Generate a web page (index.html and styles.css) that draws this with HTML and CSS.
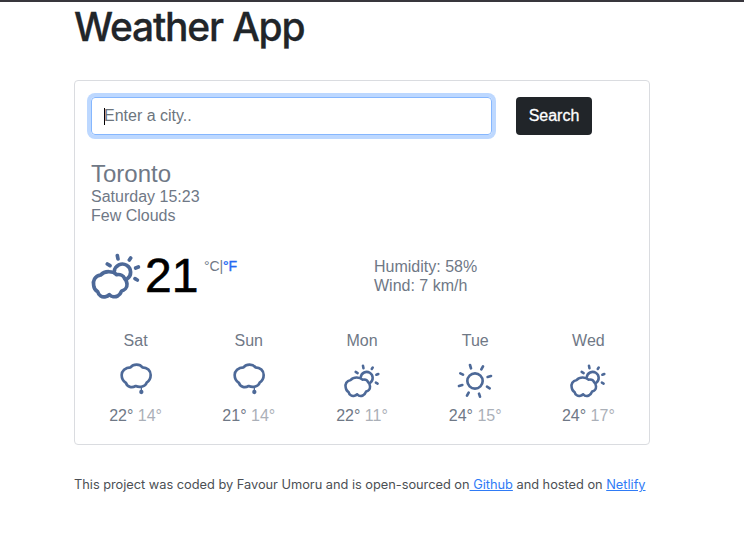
FILE: index.html
```
<!DOCTYPE html>
<html lang="en">
<head>
<meta charset="utf-8">
<title>Weather App</title>
<link rel="stylesheet" href="styles.css">
</head>
<body>
<svg class="defs" width="0" height="0">
  <symbol id="partly" viewBox="30 35 156 147">
    <path d="M62 104C44 107 38 122 41 135C42 145 47 151 53 154C56 166 66 172 77 169Q83 168 88 163C94 170 105 171 113 167C120 163 123 157 125 152C133 150 142 142 141 131C140 122 138 118 134 115C131 106 121 101 110 103C100 92 74 90 62 104Z"/>
    <path d="M103 93A24.500 24.500 0 1 1 141 116"/>
    <path class="ray" d="M112 46L114 56M152 53L148 59M82 71L90 76M167 83L175 80M165 115L172 119"/>
  </symbol>
  <symbol id="rain" viewBox="78 114 120 108" overflow="visible">
    <path d="M122 127C130 116 150 116 157 127C172 127 182 137 182 150C182 162 176 169 170 173C166 185 150 189 137 183C126 189 112 187 108 174C98 168 95 160 95 150C95 138 105 127 122 127Z"/>
    <path class="stem" d="M154 187V200"/>
    <circle class="drop" cx="154" cy="201" r="6.5"/>
  </symbol>
  <symbol id="sun" viewBox="405 114 120 108" overflow="visible">
    <circle cx="465" cy="168" r="23"/>
    <path d="M450 120L453 130M489 124L484 133M513 153L503 156M509 190L501 185M480 215L477 206M441 212L446 203M417 183L427 180M421 145L429 149"/>
  </symbol>
</svg>
<main class="container">
  <h1>Weather App</h1>
  <section class="card">
    <form class="search">
      <div class="field"><span class="caret"></span>Enter a city..</div>
      <button type="button">Search</button>
    </form>
    <div class="place">
      <h2>Toronto</h2>
      <div>Saturday 15:23</div>
      <div>Few Clouds</div>
    </div>
    <div class="now">
      <div class="reading">
        <svg class="icon big"><use href="#partly"/></svg>
        <strong>21</strong>
        <span class="units">°C|<a>°F</a></span>
      </div>
      <div class="details">
        <div>Humidity: 58%</div>
        <div>Wind: 7 km/h</div>
      </div>
    </div>
    <div class="forecast">
      <div class="day"><span>Sat</span><svg class="icon"><use href="#rain"/></svg><span>22° <i>14°</i></span></div>
      <div class="day"><span>Sun</span><svg class="icon"><use href="#rain"/></svg><span>21° <i>14°</i></span></div>
      <div class="day"><span>Mon</span><svg class="icon small"><use href="#partly"/></svg><span>22° <i>11°</i></span></div>
      <div class="day"><span>Tue</span><svg class="icon"><use href="#sun"/></svg><span>24° <i>15°</i></span></div>
      <div class="day"><span>Wed</span><svg class="icon small"><use href="#partly"/></svg><span>24° <i>17°</i></span></div>
    </div>
  </section>
  <footer>This project was coded by Favour Umoru and is open-sourced on<a> Github</a> and hosted on <a>Netlify</a></footer>
</main>
</body>
</html>
```
FILE: styles.css
```
* { box-sizing: border-box; }
body {
  margin: 0;
  border-top: 2px solid #38363c;
  background: #fff;
  color: #6f7886;
  font: 16px/19px "Liberation Sans", Arial, sans-serif;
}
.defs { position: absolute; }
.container { width: 576px; margin-left: 74px; }
h1 {
  margin: 0 0 28px;
  height: 50px;
  color: #212529;
  font: 500 39px/50px Inter, sans-serif;
  letter-spacing: -1.2px;
  -webkit-text-stroke: 0.3px #212529;
}
.card {
  height: 365px;
  padding: 16px;
  border: 1px solid #dadce0;
  border-radius: 4px;
}
.search { display: flex; gap: 24px; }
.field {
  display: flex;
  align-items: center;
  width: 401px;
  height: 38px;
  padding: 0 12px 2px;
  border: 1px solid #86b7fe;
  border-radius: 4px;
  box-shadow: 0 0 0 4px #bdd8ff;
  color: #6c757d;
}
.caret { width: 1px; height: 17px; margin: 2px -1px 0 0; background: #000; }
button {
  width: 76px;
  height: 38px;
  padding: 0 0 2px;
  border: 0;
  border-radius: 4px;
  background: #212529;
  color: #fff;
  font: inherit;
  -webkit-text-stroke: 0.3px #fff;
}
.place { margin-top: 25px; }
h2 { margin: 0; font-size: 24px; line-height: 27px; font-weight: 400; }
.now { display: flex; height: 54px; margin-top: 25px; }
.reading { display: flex; width: 283px; }
.icon {
  width: 40px;
  height: 36px;
  overflow: visible;
  fill: none;
  stroke: #4d6998;
  stroke-width: 8;
  stroke-linecap: round;
  stroke-linejoin: round;
}
.stem { stroke-width: 4; }
.drop { fill: #4d6998; stroke: none; }
.big { width: 52px; height: 49px; margin: 2px 0 0 -1px; stroke-width: 11; }
.small { width: 38px; height: 36px; stroke-width: 10.500; }
strong {
  width: 53px;
  margin: 1px 0 0 3px;
  color: #000;
  font-size: 48px;
  line-height: 50px;
  font-weight: 400;
  -webkit-text-stroke: 0.6px #000;
}
.units { margin: 8px 0 0 6px; font-size: 14px; line-height: 16px; letter-spacing: -0.1px; }
.units a { color: #2468f2; -webkit-text-stroke: 0.4px #2468f2; }
.details { margin-top: 7px; }
.forecast {
  display: grid;
  grid-template-columns: repeat(5, 1fr);
  margin: 27px -12px 0;
}
.day { display: flex; flex-direction: column; align-items: center; }
.day .icon { margin: 13px 0 7px; }
.day i { color: #abb0b8; font-style: normal; }
footer {
  margin-top: 30px;
  color: #4b4f54;
  font: 12.8px/20px Inter, sans-serif;
  letter-spacing: -0.015px;
  white-space: nowrap;
}
footer a { color: #2f7bf6; text-decoration: underline; }
```
